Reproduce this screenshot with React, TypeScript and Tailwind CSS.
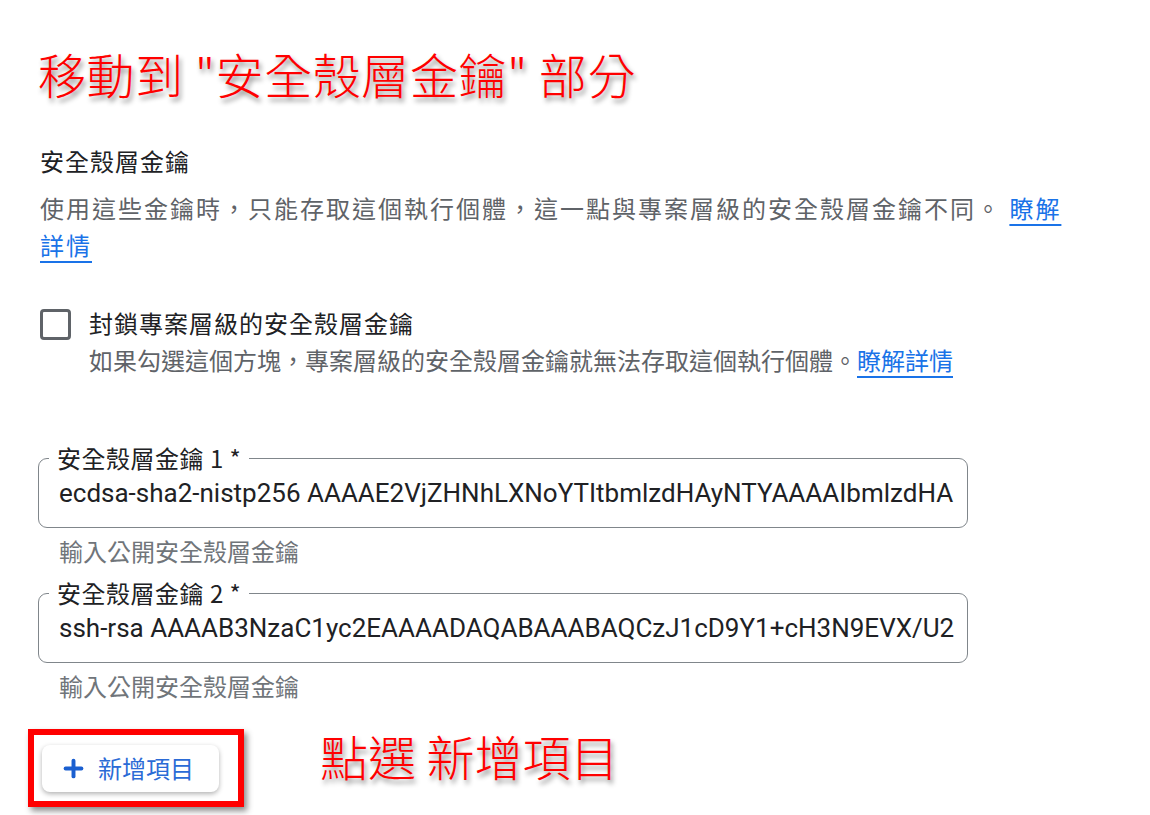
import { Plus } from 'lucide-react';

const cjk = "font-['Noto_Sans_CJK_TC','Noto_Sans',sans-serif]";
const callout =
    "text-[#ff0000] [-webkit-text-stroke:7px_white] [paint-order:stroke_fill] [text-shadow:2px_4px_5px_rgba(0,0,0,0.45)]";

function KeyField({ label, value }: { label: string; value: string }) {
    return (
        <div className="flex flex-col">
            <fieldset className="ml-[38px] w-[930px] min-w-0 h-[84px] rounded-[9px] border-[1.5px] border-[#80868b] pl-[10px] pr-0 m-0">
                <legend className="px-[8px] text-[24px] leading-[28px] tracking-[0.5px] text-[#202124]">
                    {label}
                </legend>
                <div className="mt-[6px] pl-[10px] pr-[16px] overflow-hidden whitespace-nowrap font-['Roboto','Liberation_Sans',sans-serif] text-[26px] leading-[30px] text-[#202124]">
                    {value}
                </div>
            </fieldset>
            <div className="mt-[8px] ml-[59px] text-[24px] leading-[30px] text-[#70757a]">輸入公開安全殼層金鑰</div>
        </div>
    );
}

export default function App() {
    return (
        <div className={`relative w-[1150px] h-[815px] overflow-hidden bg-white ${cjk}`}>
            <div className="pt-[45px] pl-[38px]">
                <h1 className={`text-[48px] leading-[56px] tracking-[0.6px] font-light whitespace-nowrap ${callout}`}>
                    移動到 "安全殼層金鑰" 部分
                </h1>
            </div>

            <div className="pl-[40px]">
                <h2 className="mt-[44px] text-[24px] leading-[32px] tracking-[1px] font-normal text-[#202124]">安全殼層金鑰</h2>
                <p className="mt-[12px] text-[24px] leading-[37px] tracking-[2px] text-[#5f6368]">
                    使用這些金鑰時，只能存取這個執行個體，這一點與專案層級的安全殼層金鑰不同。{' '}
                    <a className="text-[#1a73e8] underline decoration-2 underline-offset-[6px]">瞭解</a>
                    <br />
                    <a className="text-[#1a73e8] underline decoration-2 underline-offset-[6px]">詳情</a>
                </p>

                <div className="mt-[45px] flex items-start gap-[18px]">
                    <div className="mt-[1px] w-[31px] h-[31px] shrink-0 rounded-[4px] border-[3px] border-[#5f6368]" />
                    <div className="flex flex-col">
                        <span className="text-[24px] leading-[30px] tracking-[1px] font-normal text-[#202124]">
                            封鎖專案層級的安全殼層金鑰
                        </span>
                        <span className="mt-[6px] text-[24px] leading-[32px] text-[#5f6368]">
                            如果勾選這個方塊，專案層級的安全殼層金鑰就無法存取這個執行個體。
                            <a className="text-[#1a73e8] underline decoration-2 underline-offset-[6px]">瞭解詳情</a>
                        </span>
                    </div>
                </div>
            </div>

            <div className="mt-[68px] flex flex-col gap-[13px]">
                <KeyField
                    label="安全殼層金鑰 1 *"
                    value="ecdsa-sha2-nistp256 AAAAE2VjZHNhLXNoYTItbmlzdHAyNTYAAAAIbmlzdHA"
                />
                <KeyField
                    label="安全殼層金鑰 2 *"
                    value="ssh-rsa AAAAB3NzaC1yc2EAAAADAQABAAABAQCzJ1cD9Y1+cH3N9EVX/U2"
                />
            </div>

            <div className="mt-[28px] ml-[28px] flex items-start gap-[76px]">
                <div className="w-[216px] h-[78px] border-[6px] border-[#ff0000] shadow-[3px_4px_6px_rgba(0,0,0,0.45)] flex items-center pl-[8px]">
                    <button className="w-[177px] h-[47px] rounded-[8px] bg-white shadow-[0_2px_5px_rgba(0,0,0,0.3)] flex items-center gap-[11px] pl-[18px] text-[24px] text-[#2b6bd6]">
                        <Plus className="w-[27px] h-[27px]" strokeWidth={3.5} color="#1a5fd0" />
                        <span>新增項目</span>
                    </button>
                </div>
                <div className={`mt-[-2px] text-[48px] leading-[56px] font-light whitespace-nowrap ${callout}`}>
                    點選 新增項目
                </div>
            </div>
        </div>
    );
}
